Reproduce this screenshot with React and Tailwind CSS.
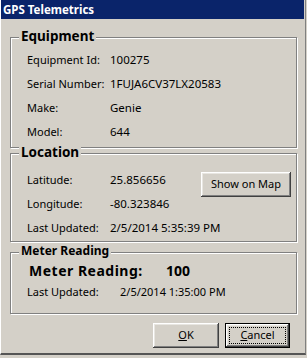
export default function App() {
  const btn =
    "bg-[#d4d0c8] shadow-[inset_-1px_-1px_0_#404040,inset_1px_1px_0_#ffffff,inset_-2px_-2px_0_#808080,inset_2px_2px_0_#e8e6e1] flex items-center justify-center text-[11px] text-black whitespace-nowrap";
  const box =
    "relative border border-[#808080] shadow-[1px_1px_0_#ffffff,inset_1px_1px_0_#ffffff] w-[287px]";
  const legend =
    "absolute left-[8px] top-[-10px] px-[2px] bg-[#d4d0c8] font-bold leading-[16px] text-black whitespace-nowrap";
  const row = "h-[24px] flex items-center whitespace-nowrap";
  return (
    <div className="w-[307px] h-[358px] bg-[#d4d0c8] overflow-hidden font-['Noto_Sans',sans-serif] text-black">
      <div className="w-[306px] h-[355px] border-l border-l-white border-r border-r-[#808080] border-b-2 border-b-[#555555] flex flex-col">
        <div className="h-[19px] w-[303px] bg-[#0a246a] text-white font-bold text-[11.5px] leading-[19px] pl-[2px]">
          GPS Telemetrics
        </div>
        <div className="pl-[9px] flex flex-col">
          {/* Equipment */}
          <div className={`${box} h-[111px] mt-[18px] pt-[10px] pl-[16px]`}>
            <div className={`${legend} text-[13.5px]`}>Equipment</div>
            {[
              ["Equipment Id:", "100275"],
              ["Serial Number:", "1FUJA6CV37LX20583"],
              ["Make:", "Genie"],
              ["Model:", "644"],
            ].map(([l, v]) => (
              <div key={l} className={row}>
                <span className="w-[83px] shrink-0 text-[11px]">{l}</span>
                <span className="text-[11.5px]">{v}</span>
              </div>
            ))}
          </div>
          {/* Location */}
          <div className={`${box} h-[89px] mt-[5px] pt-[14px] pl-[16px] pr-[5px] flex`}>
            <div className={`${legend} text-[13.5px]`}>Location</div>
            <div className="flex-1 min-w-0 flex flex-col">
              {[
                ["Latitude:", "25.856656"],
                ["Longitude:", "-80.323846"],
                ["Last Updated:", "2/5/2014 5:35:39 PM"],
              ].map(([l, v]) => (
                <div key={l} className={row}>
                  <span className="w-[83px] shrink-0 text-[11px]">{l}</span>
                  <span className="text-[11.5px]">{v}</span>
                </div>
              ))}
            </div>
            <div className={`${btn} w-[90px] h-[25px] mt-[4px] shrink-0`}>Show on Map</div>
          </div>
          {/* Meter Reading */}
          <div className={`${box} h-[62px] mt-[10px] pt-[6px] pl-[16px]`}>
            <div className={`${legend} text-[12px]`}>Meter Reading</div>
            <div className="h-[22px] flex items-center whitespace-nowrap">
              <span className="w-[139px] shrink-0 pl-[2px] font-bold text-[14px] tracking-[0.5px]">Meter Reading:</span>
              <span className="font-bold text-[14px]">100</span>
            </div>
            <div className="h-[22px] flex items-center whitespace-nowrap">
              <span className="w-[93px] shrink-0 text-[11px]">Last Updated:</span>
              <span className="text-[11px]">2/5/2014 1:35:00 PM</span>
            </div>
          </div>
          {/* Buttons */}
          <div className="w-[287px] mt-[9px] pr-[7px] flex justify-end gap-[6px]">
            <div className={`${btn} w-[66px] h-[25px]`}>
              <span><u>O</u>K</span>
            </div>
            <div className="w-[65px] h-[25px] border border-black">
              <div className={`${btn} w-full h-full p-[3px]`}>
                <div className="w-full h-full border border-dotted border-black flex items-center justify-center">
                  <span><u>C</u>ancel</span>
                </div>
              </div>
            </div>
          </div>
        </div>
      </div>
    </div>
  );
}
